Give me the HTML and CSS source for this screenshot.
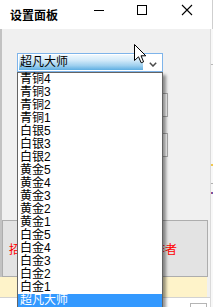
FILE: index.html
```html
<!DOCTYPE html>
<html lang="zh">
<head>
<meta charset="utf-8">
<title>设置面板</title>
<link rel="stylesheet" href="styles.css">
</head>
<body>
<div class="win">
  <div class="titlebar">
    <span class="title">设置面板</span>
    <div class="controls">
      <svg class="ctl" width="44" height="29" viewBox="0 0 44 29"><line x1="17" y1="10.5" x2="27" y2="10.5" stroke="#000" stroke-width="1"/></svg>
      <svg class="ctl" width="43" height="29" viewBox="0 0 43 29"><rect x="16.5" y="5.5" width="9" height="9" fill="none" stroke="#000" stroke-width="1"/></svg>
      <svg class="ctl" width="46" height="29" viewBox="0 0 46 29"><path d="M18 5 L28 15 M28 5 L18 15" stroke="#000" stroke-width="1.1" fill="none"/></svg>
    </div>
  </div>
  <div class="body">
    <div class="client">
      <div class="main">
        <div class="combo">
          <span class="combo-sel">超凡大师</span>
          <svg class="chev" width="8" height="5" viewBox="0 0 8 5"><polyline points="0.8,0.8 4,4 7.2,0.8" fill="none" stroke="#4a4a4a" stroke-width="1.5"/></svg>
        </div>
        <div class="field f1"></div>
        <div class="field f2"></div>
        <div class="btn"><span class="btn-text">招募测试人员，请私信联系作者</span></div>
      </div>
      <div class="notice"></div>
      <div class="footer"><div class="fbox"></div></div>
    </div>
    <div class="strip">
      <div class="mark m1"></div>
      <div class="mark m2"></div>
      <div class="mark m3"></div>
      <div class="mark m4"></div>
    </div>
  </div>
  <ul class="dropdown">
    <li>青铜4</li>
    <li>青铜3</li>
    <li>青铜2</li>
    <li>青铜1</li>
    <li>白银5</li>
    <li>白银3</li>
    <li>白银2</li>
    <li>黄金5</li>
    <li>黄金4</li>
    <li>黄金3</li>
    <li>黄金2</li>
    <li>黄金1</li>
    <li>白金5</li>
    <li>白金4</li>
    <li>白金3</li>
    <li>白金2</li>
    <li>白金1</li>
    <li class="selected">超凡大师</li>
  </ul>
  <svg class="cursor" width="13" height="20" viewBox="0 0 13 20"><path d="M0.5 0.5 L0.5 16.5 L4.5 12.8 L7.2 18.8 L9.6 17.8 L7 11.8 L11.8 11.8 Z" fill="#fff" stroke="#000" stroke-width="1" stroke-linejoin="miter"/></svg>
</div>
</body>
</html>
```

FILE: styles.css
```css
* {
  box-sizing: border-box;
  margin: 0;
  padding: 0;
}

html,
body {
  width: 213px;
  height: 307px;
  overflow: hidden;
  background: #f0f0f0;
}

body {
  font-family: "Liberation Sans", "Noto Sans CJK SC", sans-serif;
  font-size: 12px;
  color: #000;
}

.win {
  position: relative;
  width: 213px;
  height: 307px;
  overflow: hidden;
}

.titlebar {
  display: flex;
  height: 29px;
  background: #fff;
  border-right: 1px solid #cfcfcf;
  padding-right: 2px;
}

.title {
  padding-left: 10px;
  line-height: 29px;
  font-weight: bold;
  font-family: "Noto Sans CJK SC", sans-serif;
  font-size: 12px;
}

.controls {
  margin-left: auto;
  display: flex;
}

.ctl {
  display: block;
}

.body {
  display: flex;
  height: 278px;
}

.client {
  width: 210px;
  display: flex;
  flex-direction: column;
}

.main {
  height: 248px;
  border-left: 2px solid #c2c2c2;
  padding-top: 24px;
  display: flex;
  flex-direction: column;
  align-items: flex-start;
}

.combo {
  margin-left: 15px;
  width: 146px;
  height: 19px;
  border: 1px solid #7eb4ea;
  background: #fff;
  padding: 1px;
  display: flex;
  align-items: flex-start;
}

.combo-sel {
  width: 124px;
  height: 15px;
  line-height: 15px;
  padding-left: 1px;
  background: linear-gradient(#eef7fd, #d3eaf9 35%, #9fd0ef 70%, #5eaee2);
  white-space: nowrap;
}

.chev {
  display: block;
  margin-left: auto;
  margin-right: 4px;
  margin-top: 7px;
}

.field {
  margin-left: 58px;
  width: 108px;
  height: 24px;
  border: 1px solid #acacac;
  background: #fff;
}

.f1 {
  margin-top: 21px;
}

.f2 {
  margin-top: 16px;
}

.btn {
  margin-top: 63px;
  width: 206px;
  height: 57px;
  border: 1px solid #adadad;
  background: #e3e3e3;
  display: flex;
  align-items: center;
  padding-left: 6px;
}

.btn-text {
  color: #ff0000;
  font-family: "Noto Sans CJK SC", sans-serif;
  font-size: 12px;
  line-height: 14px;
  white-space: nowrap;
}

.notice {
  width: 207px;
  height: 20px;
  background: #fef3c9;
}

.footer {
  height: 10px;
  border-top: 1px solid #d2d2d2;
  background: #fff;
  display: flex;
  align-items: flex-start;
}

.fbox {
  margin-left: 190px;
  margin-top: 5px;
  width: 17px;
  height: 10px;
  border: 1px solid #b5b5b5;
}

.strip {
  width: 3px;
  background: #f8f8f8;
  border-left: 1px solid #dadada;
  display: flex;
  flex-direction: column;
}

.mark {
  width: 100%;
}

.m1 {
  margin-top: 35px;
  height: 1px;
  background: #b9b9b9;
}

.m2 {
  margin-top: 99px;
  height: 2px;
  background: #f0c850;
}

.m3 {
  margin-top: 17px;
  height: 1px;
  background: #b0b0b0;
}

.m4 {
  margin-top: 8px;
  height: 2px;
  background: linear-gradient(90deg, #d04060, #4060d0);
}

.dropdown {
  position: absolute;
  left: 17px;
  top: 72px;
  width: 146px;
  list-style: none;
  background: #fff;
  border: 1px solid #646464;
  box-shadow: 3px 3px 3px rgba(0, 0, 0, 0.42);
}

.dropdown li {
  height: 13px;
  line-height: 13px;
  padding-left: 2px;
  white-space: nowrap;
  font-family: "Liberation Sans", "Noto Sans CJK SC", sans-serif;
  font-size: 12px;
}

.dropdown li.selected {
  background: #3399ff;
  color: #fff;
}

.cursor {
  position: absolute;
  left: 134px;
  top: 44px;
}
```
